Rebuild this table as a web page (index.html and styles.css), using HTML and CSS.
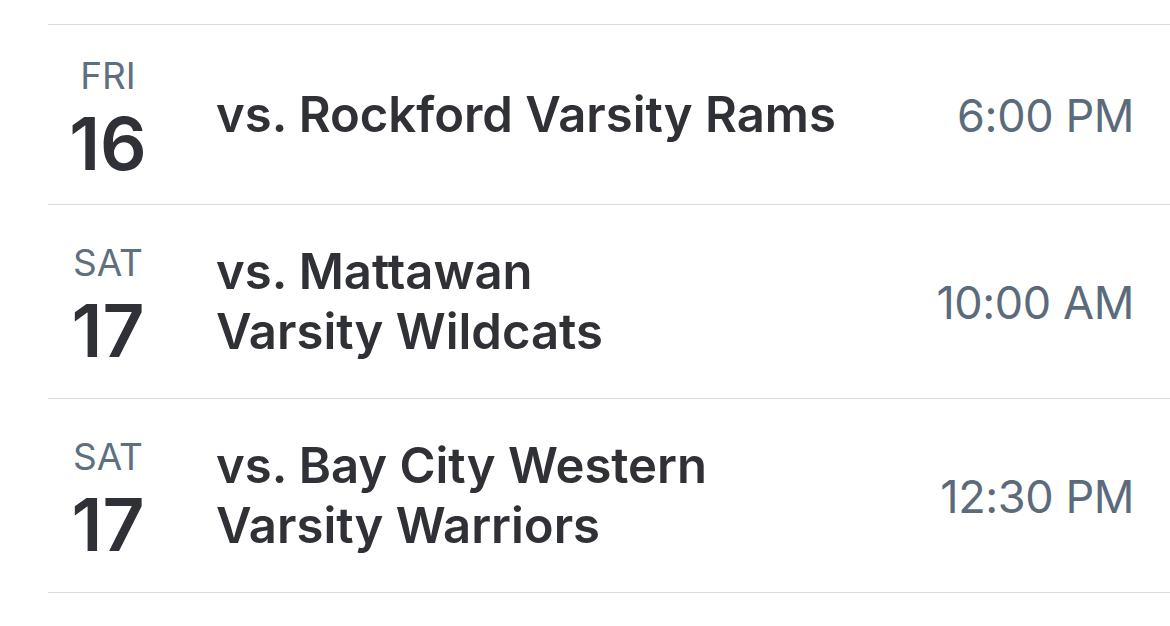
FILE: index.html
```html
<!DOCTYPE html>
<html>
<head>
<meta charset="utf-8">
<link rel="stylesheet" href="styles.css">
</head>
<body>
<div class="list">
  <div class="row">
    <div class="date"><div class="dow">FRI</div><div class="day">16</div></div>
    <div class="title">vs. Rockford Varsity Rams</div>
    <div class="time">6:00 PM</div>
  </div>
  <div class="row">
    <div class="date"><div class="dow">SAT</div><div class="day">17</div></div>
    <div class="title">vs. Mattawan<br>Varsity Wildcats</div>
    <div class="time">10:00 AM</div>
  </div>
  <div class="row">
    <div class="date"><div class="dow">SAT</div><div class="day">17</div></div>
    <div class="title">vs. Bay City Western<br>Varsity Warriors</div>
    <div class="time">12:30 PM</div>
  </div>
</div>
</body>
</html>
```
FILE: styles.css
```css
html, body {
  margin: 0;
  padding: 0;
  background: #ffffff;
}
body {
  font-family: Inter, "Liberation Sans", sans-serif;
  color: #303137;
}
.list {
  margin: 24px 0 0 48px;
  border-top: 1px solid #d9dcdf;
}
.row {
  display: flex;
  align-items: center;
  padding: 37px 36px 36px 0;
  border-bottom: 1px solid #d9dcdf;
}
.date {
  width: 120px;
  flex: none;
  display: flex;
  flex-direction: column;
  align-items: center;
  margin-right: 48px;
}
.dow {
  font-size: 37px;
  line-height: 27px;
  color: #5e7080;
  font-weight: 400;
}
.day {
  font-size: 73px;
  line-height: 109px;
  margin-bottom: -30px;
  font-weight: 600;
}
.title {
  flex: 1;
  font-size: 49px;
  line-height: 60px;
  font-weight: 600;
}
.time {
  flex: none;
  font-size: 45px;
  letter-spacing: -0.4px;
  color: #5b6b7b;
  font-weight: 400;
}
```
